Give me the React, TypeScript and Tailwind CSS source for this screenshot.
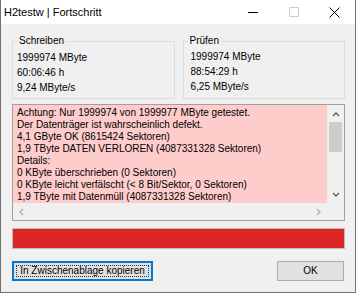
import React from 'react';

const reportLines = [
  'Achtung: Nur 1999974 von 1999977 MByte getestet.',
  'Der Datenträger ist wahrscheinlich defekt.',
  '4,1 GByte OK (8615424 Sektoren)',
  '1,9 TByte DATEN VERLOREN (4087331328 Sektoren)',
  'Details:',
  '0 KByte überschrieben (0 Sektoren)',
  '0 KByte leicht verfälscht (< 8 Bit/Sektor, 0 Sektoren)',
  '1,9 TByte mit Datenmüll (4087331328 Sektoren)',
];

const Chevron: React.FC<{ dir: 'up' | 'down' | 'left' | 'right'; color: string }> = ({ dir, color }) => {
  const pts = {
    up: '1,5 4,2 7,5',
    down: '1,1 4,4 7,1',
    left: '5,1 2,4 5,7',
    right: '2,1 5,4 2,7',
  }[dir];
  const vertical = dir === 'up' || dir === 'down';
  return (
    <svg width={vertical ? 8 : 7} height={vertical ? 6 : 8} viewBox={vertical ? '0 0 8 6' : '0 0 7 8'}>
      <polyline points={pts} fill="none" stroke={color} strokeWidth="1.4" />
    </svg>
  );
};

export default function App() {
  return (
    <div className="w-[356px] h-[293px] bg-[#f0f0f0] border-x border-b border-[#707070] flex flex-col overflow-hidden text-black font-['Liberation_Sans',Arial,sans-serif] text-[10px] leading-[12px]">
      {/* Title bar */}
      <div className="h-[24px] bg-white flex items-center shrink-0">
        <span className="pl-[3px] text-[11px]">H2testw | Fortschritt</span>
        <div className="ml-auto flex h-full">
          <div className="w-[41px] flex items-center justify-center">
            <div className="w-[10px] h-px bg-black" />
          </div>
          <div className="w-[41px] flex items-center justify-center">
            <div className="w-[10px] h-[10px] border border-[#cccccc]" />
          </div>
          <div className="w-[41px] flex items-center justify-center">
            <svg width="11" height="11" viewBox="0 0 11 11">
              <path d="M0.5 0.5 L10.5 10.5 M10.5 0.5 L0.5 10.5" stroke="#000" strokeWidth="1" fill="none" />
            </svg>
          </div>
        </div>
      </div>

      <div className="flex-1 flex flex-col pl-[11px] pr-[10px] pt-[11px]">
        {/* Group boxes */}
        <div className="flex gap-[8px]">
          <fieldset className="w-[163px] border border-[#dcdcdc] pl-[4px] pt-[3px] pb-[3px]">
            <legend className="px-[2px]">Schreiben</legend>
            <div className="leading-[15px]">
              <div>1999974 MByte</div>
              <div>60:06:46 h</div>
              <div>9,24 MByte/s</div>
            </div>
          </fieldset>
          <fieldset className="w-[163px] border border-[#dcdcdc] pl-[7px] pt-[2px] pb-[4px]">
            <legend className="px-[2px] -ml-[3px]">Prüfen</legend>
            <div className="leading-[15px]">
              <div>1999974 MByte</div>
              <div>88:54:29 h</div>
              <div>6,25 MByte/s</div>
            </div>
          </fieldset>
        </div>

        {/* Report box */}
        <div className="mt-[5px] h-[117px] border border-[#a0a0a0] grid grid-cols-[1fr_17px] grid-rows-[1fr_17px]">
          <div className="bg-[#ffcccc] pl-[4px] pt-[2px] overflow-hidden whitespace-nowrap">
            {reportLines.map((l) => (
              <div key={l}>{l}</div>
            ))}
          </div>
          <div className="bg-[#f0f0f0] flex flex-col">
            <div className="h-[17px] flex items-center justify-center">
              <Chevron dir="up" color="#606060" />
            </div>
            <div className="h-[30px] mx-[2px] bg-[#cdcdcd]" />
            <div className="flex-1" />
            <div className="h-[17px] flex items-center justify-center">
              <Chevron dir="down" color="#606060" />
            </div>
          </div>
          <div className="bg-[#f0f0f0] flex justify-between">
            <div className="w-[17px] flex items-center justify-center">
              <Chevron dir="left" color="#b0b0b0" />
            </div>
            <div className="w-[17px] flex items-center justify-center">
              <Chevron dir="right" color="#b0b0b0" />
            </div>
          </div>
          <div className="bg-[#f0f0f0]" />
        </div>

        {/* Progress bar */}
        <div className="mt-[7px] h-[21px] border border-[#bcbcbc] bg-[#dc2626]" />

        {/* Buttons */}
        <div className="mt-[12px] flex justify-between pr-[1px]">
          <button className="w-[141px] h-[20px] border-2 border-[#0078d7] bg-[#e1e1e1] p-[2px] flex">
            <span className="flex-1 flex items-center justify-center outline outline-1 outline-dotted outline-[#333] -outline-offset-1">
              In Zwischenablage kopieren
            </span>
          </button>
          <button className="w-[67px] h-[20px] border border-[#adadad] bg-[#e1e1e1] flex items-center justify-center">
            OK
          </button>
        </div>
      </div>
    </div>
  );
}
